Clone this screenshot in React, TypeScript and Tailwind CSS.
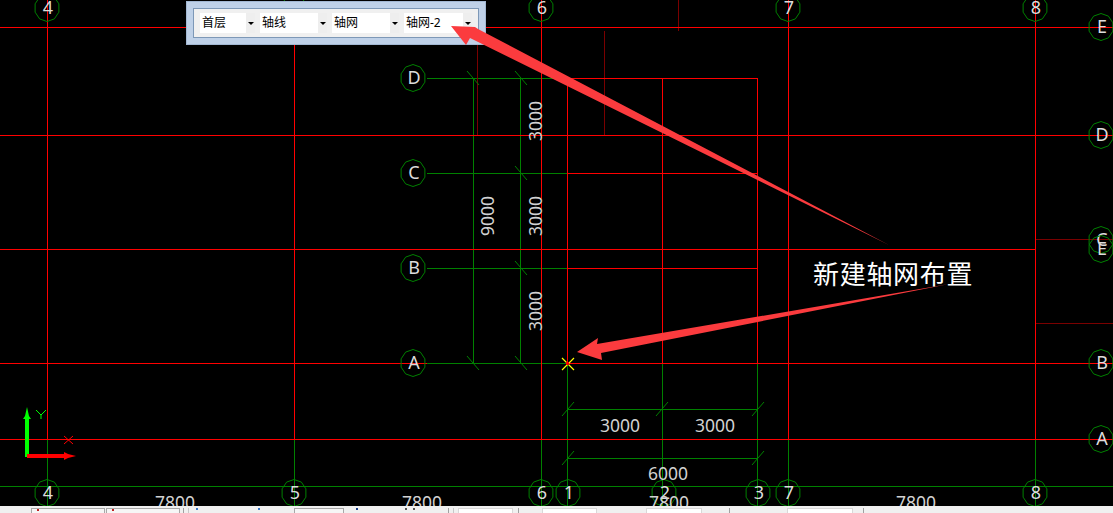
const RED = "#ff0000"
const GREEN = "#008000"
const DARK = "#7a0000"
const ARROW = "#fb3b3e"

// [x1, y1, x2, y2, colour]
const lines: [number, number, number, number, string][] = [
  // green parts of the axes
  [0, 486.5, 1113, 486.5, GREEN],
  [47.5, 439, 47.5, 506, GREEN],
  [294.5, 439, 294.5, 506, GREEN],
  [541.5, 439, 541.5, 506, GREEN],
  [788.5, 439, 788.5, 506, GREEN],
  [1035.5, 439, 1035.5, 506, GREEN],
  [567.5, 363, 567.5, 506, GREEN],
  [662.5, 363, 662.5, 506, GREEN],
  [757.5, 363, 757.5, 506, GREEN],
  [427, 78.5, 568, 78.5, GREEN],
  [427, 173.5, 568, 173.5, GREEN],
  [427, 268.5, 568, 268.5, GREEN],
  [427, 363.5, 568, 363.5, GREEN],
  [473.5, 78, 473.5, 363, GREEN],
  [520.5, 78, 520.5, 363, GREEN],
  [568, 409.5, 758, 409.5, GREEN],
  [568, 458.5, 758, 458.5, GREEN],
  // dark red stubs
  [678.5, 0, 678.5, 31, DARK],
  [604.5, 31, 604.5, 135, DARK],
  [477.5, 45, 477.5, 135, DARK],
  [1035, 239.5, 1113, 239.5, DARK],
  [1035, 323.5, 1113, 323.5, DARK],
  // red grid
  [0, 27.5, 1113, 27.5, RED],
  [0, 135.5, 1113, 135.5, RED],
  [0, 249.5, 1035, 249.5, RED],
  [0, 363.5, 427, 363.5, RED],
  [568, 363.5, 1113, 363.5, RED],
  [0, 439.5, 1113, 439.5, RED],
  [47.5, 0, 47.5, 439, RED],
  [294.5, 45, 294.5, 439, RED],
  [541.5, 0, 541.5, 439, RED],
  [788.5, 0, 788.5, 439, RED],
  [1035.5, 0, 1035.5, 439, RED],
  [567.5, 78, 567.5, 363, RED],
  [662.5, 78, 662.5, 363, RED],
  [757.5, 78, 757.5, 363, RED],
  [568, 78.5, 758, 78.5, RED],
  [568, 173.5, 758, 173.5, RED],
  [568, 268.5, 758, 268.5, RED],
]

// dimension ticks, [x, y, dir]: dir 1 leans like "\", -1 like "/"
const ticks: [number, number, number][] = [
  [473, 78, 1],
  [521, 78, 1],
  [521, 173, 1],
  [521, 268, 1],
  [473, 363, 1],
  [521, 363, 1],
  [568, 409, -1],
  [662, 409, -1],
  [758, 409, -1],
  [568, 458, -1],
  [758, 458, -1],
]

const bubbles: [number, number, string][] = [
  [47, 8, "4"],
  [294, 8, "5"],
  [541, 8, "6"],
  [788, 8, "7"],
  [1035, 8, "8"],
  [413, 78, "D"],
  [413, 173, "C"],
  [413, 268, "B"],
  [413, 363, "A"],
  [1101, 27, "E"],
  [1101, 135, "D"],
  [1101, 240, "C"],
  [1101, 249, "E"],
  [1101, 363, "B"],
  [1101, 439, "A"],
  [47, 493, "4"],
  [294, 493, "5"],
  [541, 493, "6"],
  [568, 493, "1"],
  [664, 493, "2"],
  [758, 493, "3"],
  [788, 493, "7"],
  [1035, 493, "8"],
]

const dims: [number, number, string][] = [
  [175, 509, "7800"],
  [422, 509, "7800"],
  [669, 509, "7800"],
  [916, 509, "7800"],
  [620, 432, "3000"],
  [715, 432, "3000"],
  [668, 480, "6000"],
]

const vdims: [number, number, string][] = [
  [542, 121, "3000"],
  [542, 216, "3000"],
  [542, 311, "3000"],
  [494, 216, "9000"],
]

function bubblePoints(cx: number, cy: number) {
  const pts = []
  for (let i = 0; i < 10; i++) {
    const a = (i * Math.PI) / 5 + Math.PI / 10
    pts.push(`${cx + 12.5 * Math.cos(a)},${cy + 13.5 * Math.sin(a)}`)
  }
  return pts.join(" ")
}

function Drawing() {
  return (
    <svg width="1113" height="506" viewBox="0 0 1113 506" className="block">
      {lines.map(([x1, y1, x2, y2, c], i) => (
        <line key={i} x1={x1} y1={y1} x2={x2} y2={y2} stroke={c} strokeWidth="1" shapeRendering="crispEdges" />
      ))}
      {ticks.map(([x, y, d], i) => (
        <line key={i} x1={x - 6} y1={y - 7 * d} x2={x + 6} y2={y + 7 * d} stroke={GREEN} strokeWidth="1" />
      ))}
      {bubbles.map(([x, y, t], i) => (
        <g key={i}>
          <polygon points={bubblePoints(x, y)} fill="none" stroke={GREEN} strokeWidth="1" />
          <text x={x + 1} y={y + 6} textAnchor="middle" fontSize="18" fill="#dcdcdc">
            {t}
          </text>
        </g>
      ))}
      {dims.map(([x, y, t], i) => (
        <text key={i} x={x} y={y} textAnchor="middle" fontSize="17.5" fill="#d2d2d2">
          {t}
        </text>
      ))}
      {vdims.map(([x, y, t], i) => (
        <text key={i} x={x} y={y} textAnchor="middle" fontSize="17.5" fill="#d2d2d2" transform={`rotate(-90 ${x} ${y})`}>
          {t}
        </text>
      ))}

      {/* cursor */}
      <path d="M562 358 L574 370 M574 358 L562 370" stroke="#ffff00" strokeWidth="1.2" />
      <rect x="566" y="362" width="3" height="3" fill={RED} />

      {/* axis marker */}
      <rect x="25" y="416" width="4" height="41" fill="#00ff00" />
      <path d="M27 407 L29 416 L31 419 L23 419 L25 416 Z" fill="#00ff00" />
      <path d="M36 410 L41 415 L46 410 M41 415 L41 419" stroke="#00ff00" fill="none" />
      <rect x="27" y="454" width="38" height="4" fill={RED} />
      <path d="M76 456 L68 454 L64 452 L64 460 L68 458 Z" fill={RED} />
      <path d="M64 436 L73 444 M73 436 L64 444" stroke={RED} fill="none" />
    </svg>
  )
}

// arrows and the note were drawn on top of the finished screenshot, toolbar included
function Annotation() {
  return (
    <svg width="1113" height="506" viewBox="0 0 1113 506" className="absolute left-0 top-0">
      <polygon points="451,26 475,27 478,29 889,245 470,38 466,45" fill={ARROW} />
      <polygon points="577,352 598,338 597,344 949,284 601,353 602,360" fill={ARROW} />
      <text x="813" y="284" fontSize="26" letterSpacing="0.7" fill="#ffffff">
        新建轴网布置
      </text>
    </svg>
  )
}

function Combo({ label, width }: { label: string; width: string }) {
  return (
    <div className={`flex h-5 items-stretch bg-white ${width}`}>
      <span className="flex-1 pl-[2px] text-xs leading-5 text-black">{label}</span>
      <span className="flex w-[9px] items-center justify-center bg-[#eeeeee]">
        <span className="border-x-[3px] border-t-[3px] border-x-transparent border-t-black" />
      </span>
    </div>
  )
}

function Toolbar() {
  return (
    <div className="absolute left-[186px] top-[1px] h-[44px] w-[300px] border border-[#a3b8d3] bg-[#bfd1e8] pl-[6px] pt-[6px]">
      <div className="flex h-[30px] w-[286px] items-center gap-[5px] border border-[#7d98b7] bg-[#f0f0f0] pl-[6px]">
        <Combo label="首层" width="w-[55px]" />
        <Combo label="轴线" width="w-[67px]" />
        <Combo label="轴网" width="w-[67px]" />
        <Combo label="轴网-2" width="w-[68px]" />
      </div>
    </div>
  )
}

function StatusBar() {
  return (
    <div className="flex h-[7px] items-start overflow-hidden bg-[#f0f0f0] pt-[2px]">
      <div className="ml-[31px] h-4 w-[74px] border border-[#a8a8a8] bg-[#f6f6f6] pl-[5px]">
        <div className="h-[2px] w-[2px] bg-[#c02020]" />
      </div>
      <div className="ml-px h-4 w-[74px] border border-[#a8a8a8] bg-[#f6f6f6] pl-[5px]">
        <div className="h-[2px] w-[2px] bg-[#c02020]" />
      </div>
      <div className="ml-[3px] h-4 w-px bg-[#a0a0a0]" />
      <div className="ml-1 h-4 w-px bg-[#c8c8c8]" />
      <div className="ml-[7px] h-[2px] w-[2px] bg-[#3a78c8]" />
      <div className="ml-[60px] h-[2px] w-[2px] bg-[#3a78c8]" />
      <div className="ml-[34px] h-4 w-[50px] border border-[#a8a8a8] bg-[#f6f6f6]" />
      <div className="ml-[12px] h-[2px] w-[2px] bg-[#1a3f8a]" />
      <div className="ml-[47px] h-[2px] w-[2px] bg-[#555555]" />
      <div className="ml-[6px] h-[2px] w-[2px] bg-[#555555]" />
      <div className="ml-[33px] h-4 w-px bg-[#a0a0a0]" />
      <div className="ml-1 h-4 w-px bg-[#c8c8c8]" />
      <div className="ml-[4px] h-4 w-[55px] border border-[#d8d8d8] bg-white" />
      <div className="ml-[5px] h-4 w-px bg-[#a0a0a0]" />
      <div className="ml-[23px] h-4 w-[55px] border border-[#d8d8d8] bg-white" />
      <div className="ml-[49px] h-4 w-[56px] border border-[#d8d8d8] bg-white" />
      <div className="ml-[27px] h-4 w-px bg-[#a0a0a0]" />
      <div className="ml-[57px] h-4 w-[66px] border border-[#d8d8d8] bg-white" />
      <div className="ml-[10px] h-4 w-px bg-[#a0a0a0]" />
    </div>
  )
}

export default function App() {
  return (
    <div className="relative h-[513px] w-[1113px] overflow-hidden bg-black font-['Noto_Sans','Noto_Sans_CJK_SC',sans-serif]">
      <Drawing />
      <Toolbar />
      <Annotation />
      <StatusBar />
    </div>
  )
}
